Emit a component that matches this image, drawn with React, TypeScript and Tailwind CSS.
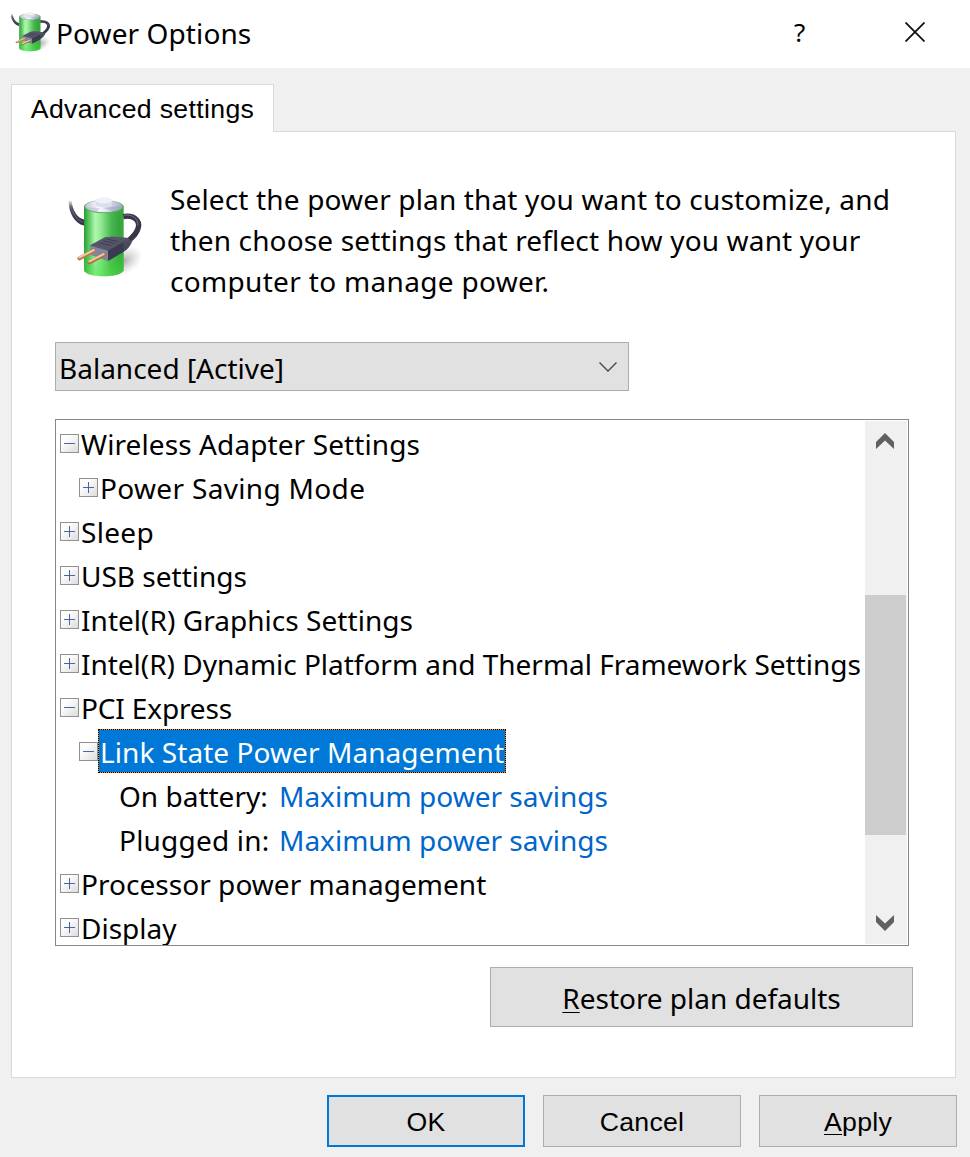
import { clsx } from "clsx";

type IconProps = { id: string; className?: string };

// Battery with a power cord wrapped around it
function BatteryIcon({ id, className }: IconProps) {
  return (
    <svg viewBox="45 45 240 250" preserveAspectRatio="none" className={className}>
      <defs>
        <linearGradient id={`${id}-body`} x1="0" x2="1" y1="0" y2="0">
          <stop offset="0" stopColor="#2c9a36" />
          <stop offset="0.1" stopColor="#4cc254" />
          <stop offset="0.28" stopColor="#b0f7b0" />
          <stop offset="0.42" stopColor="#93ea94" />
          <stop offset="0.68" stopColor="#4ab850" />
          <stop offset="0.88" stopColor="#35a53c" />
          <stop offset="1" stopColor="#3aa83f" />
        </linearGradient>
        <linearGradient id={`${id}-glow`} x1="0" x2="0" y1="0" y2="1">
          <stop offset="0.5" stopColor="#30d030" stopOpacity="0" />
          <stop offset="1" stopColor="#4de04a" stopOpacity="0.6" />
        </linearGradient>
        <linearGradient id={`${id}-cap`} x1="0" x2="1" y1="0" y2="0">
          <stop offset="0" stopColor="#c5c5da" />
          <stop offset="0.35" stopColor="#fafbfe" />
          <stop offset="0.6" stopColor="#dfe1ef" />
          <stop offset="1" stopColor="#a9acc6" />
        </linearGradient>
        <linearGradient id={`${id}-tail`} x1="0" x2="0" y1="0" y2="1">
          <stop offset="0" stopColor="#4a4b60" stopOpacity="0.1" />
          <stop offset="0.3" stopColor="#4a4b60" />
          <stop offset="1" stopColor="#30303f" />
        </linearGradient>
        <linearGradient id={`${id}-plug`} x1="0" x2="1" y1="0" y2="1">
          <stop offset="0" stopColor="#6a6a7e" />
          <stop offset="1" stopColor="#353547" />
        </linearGradient>
        <radialGradient id={`${id}-shadow`}>
          <stop offset="0" stopColor="#777" stopOpacity="0.6" />
          <stop offset="1" stopColor="#aaa" stopOpacity="0" />
        </radialGradient>
      </defs>
      <ellipse cx="220" cy="244" rx="62" ry="40" transform="rotate(-28 220 244)" fill={`url(#${id}-shadow)`} />
      <path d="M56 62 L65 62 C67 88 79 112 102 119 L102 137 C74 130 56 100 56 62Z" fill={`url(#${id}-tail)`} />
      <path d="M63 82 C69 103 82 121 101 128" fill="none" stroke="#7b7c93" strokeWidth="2" />
      <path d="M102 78 V272 C108 296 214 296 221 272 V78Z" fill={`url(#${id}-body)`} />
      <path d="M102 78 V272 C108 296 214 296 221 272 V78Z" fill={`url(#${id}-glow)`} />
      <ellipse cx="161.500" cy="80" rx="59.500" ry="20" fill="#58b05c" />
      <ellipse cx="161.500" cy="79" rx="55" ry="18" fill={`url(#${id}-cap)`} />
      <path d="M108 82 L150 84 L142 96 C124 95 111 91 108 82Z" fill="#b2b2d0" opacity="0.5" />
      <path d="M161 84 L213 77 C218 87 204 92 190 94Z" fill="#989bb8" opacity="0.5" />
      <path d="M137 61 V75 C139 84 184 84 186 75 V61Z" fill="#dcdeeb" />
      <ellipse cx="161.500" cy="61" rx="24.500" ry="9" fill="#f0f1f8" />
      <path d="M220 110 C252 104 270 122 265 143 C261 162 247 172 230 188" fill="none" stroke="#363648" strokeWidth="16" />
      <path d="M222 106 C248 102 265 117 264 137" fill="none" stroke="#747489" strokeWidth="3" />
      <path d="M120 197 L164 173 C184 168 211 172 232 174 L247 184 C241 200 231 210 222 215 L175 243 L121 224Z" fill={`url(#${id}-plug)`} />
      <path d="M120 197 L164 173 C184 168 211 172 232 176 L174 213Z" fill="#56566a" />
      <path d="M120 197 L174 213 L175 243 L121 225Z" fill="#84859b" />
      <path d="M174 213 L220 187 L222 215 L175 243Z" fill="#3b3b4f" />
      <path d="M149 189 L184 197 M160 183 L195 191 M171 178 L205 185" stroke="#3e3e50" strokeWidth="3" />
      <g strokeLinecap="round">
        <path d="M132 213 L88 236" stroke="#b27f52" strokeWidth="12" />
        <path d="M131 211 L88 233" stroke="#f3cca0" strokeWidth="6" />
        <path d="M162 225 L118 248" stroke="#a97549" strokeWidth="12" />
        <path d="M161 223 L118 245" stroke="#f3cca0" strokeWidth="6" />
      </g>
    </svg>
  );
}

function Expander({ open }: { open?: boolean }) {
  return (
    <svg viewBox="0 0 19 19" className="mt-[13px] h-[19px] w-[19px] shrink-0" shapeRendering="crispEdges">
      <defs>
        <linearGradient id="expander" x1="0" x2="1" y1="0" y2="1">
          <stop offset="0.3" stopColor="#fdfdfd" />
          <stop offset="1" stopColor="#dcdcdc" />
        </linearGradient>
      </defs>
      <rect x="0.5" y="0.5" width="18" height="18" fill="url(#expander)" stroke="#919191" />
      <path d="M4 9.500 H15" stroke="#4b63a7" />
      {!open && <path d="M9.500 4 V15" stroke="#4b63a7" />}
    </svg>
  );
}

type Row = {
  label: string;
  tracking?: string;
  open?: boolean;
  child?: boolean;
  selected?: boolean;
  value?: string;
};

const rows: Row[] = [
  { label: "Wireless Adapter Settings", tracking: "tracking-[0.1px]", open: true },
  { label: "Power Saving Mode", tracking: "tracking-[0.33px]", child: true },
  { label: "Sleep", tracking: "tracking-[0.3px]" },
  { label: "USB settings" },
  { label: "Intel(R) Graphics Settings", tracking: "tracking-[0.04px]" },
  { label: "Intel(R) Dynamic Platform and Thermal Framework Settings", tracking: "tracking-[-0.02px]" },
  { label: "PCI Express", tracking: "tracking-[-0.15px]", open: true },
  { label: "Link State Power Management", tracking: "tracking-[0.07px]", open: true, child: true, selected: true },
  { label: "On battery:", value: "Maximum power savings" },
  { label: "Plugged in:", tracking: "tracking-[0.2px]", value: "Maximum power savings" },
  { label: "Processor power management", tracking: "tracking-[0.04px]" },
  { label: "Display" },
];

function TreeRow({ label, tracking, open, child, selected, value }: Row) {
  if (value) {
    return (
      <div className="flex h-11 pl-[63px] leading-[46px]">
        <span className={clsx("w-[160px] shrink-0", tracking)}>{label}</span>
        <a className="text-[#0066cc]">{value}</a>
      </div>
    );
  }
  return (
    <div className={clsx("flex h-11", child ? "pl-[23px]" : "pl-1")}>
      <Expander open={open} />
      {selected ? (
        <span className="h-11 w-[408px] border border-dotted border-black bg-[#ff8728]">
          <span className={clsx("block h-[42px] bg-[#0078d7] pl-[1px] leading-[44px] text-white", tracking)}>{label}</span>
        </span>
      ) : (
        <span className={clsx("pl-[2px] leading-[46px]", tracking)}>{label}</span>
      )}
    </div>
  );
}

export default function App() {
  return (
    <div className="flex h-[1157px] w-[970px] flex-col overflow-hidden bg-[#f0f0f0] font-['Noto_Sans',sans-serif] text-[28px] whitespace-nowrap text-black">
      <header className="flex h-[68px] shrink-0 bg-white">
        <BatteryIcon id="title" className="mt-[11px] ml-[9px] h-[41px] w-[43px]" />
        <h1 className="ml-[4px] w-[738px] leading-[66px] tracking-[0.1px]">Power Options</h1>
        <span className="w-[111px] text-[26px] leading-[64px]">?</span>
        <svg viewBox="0 0 20 20" className="mt-[22px] h-5 w-5" fill="none" stroke="#111" strokeWidth="1.800">
          <path d="M0.500 0.500 L19.500 19.500 M19.500 0.500 L0.500 19.500" />
        </svg>
      </header>

      <div className="mt-4 ml-[11px] flex h-[48px] w-[263px] shrink-0 justify-center border border-b-0 border-[#d9d9d9] bg-white font-['Liberation_Sans',sans-serif] text-[26.667px] leading-[49px] tracking-[0.33px]">
        <span className="z-10">Advanced settings</span>
      </div>
      <main className="-mt-px ml-[11px] h-[947px] w-[945px] shrink-0 border border-[#d9d9d9] bg-white">
        <div className="-mt-px h-px w-[261px] bg-white" />
        <div className="flex pt-[47px]">
          <BatteryIcon id="main" className="mt-[16px] ml-[53px] h-[83px] w-[80px]" />
          <div className="ml-[25px] leading-[41px] tracking-[0.15px]">
            <p>Select the power plan that you want to customize, and</p>
            <p>then choose settings that reflect how you want your</p>
            <p className="tracking-[0.32px]">computer to manage power.</p>
          </div>
        </div>

        <div className="mt-[40px] ml-[43px] flex h-[49px] w-[574px] justify-between border border-[#adadad] bg-[#e1e1e1] pr-[11px] pl-[3px] leading-[50px]">
          <span>Balanced [Active]</span>
          <svg viewBox="0 0 18 10" className="mt-[19px] h-[10px] w-[18px]" fill="none" stroke="#444" strokeWidth="1.300">
            <path d="M0.500 0.500 L9 9 L17.500 0.500" />
          </svg>
        </div>

        <div className="mt-[28px] ml-[43px] flex h-[527px] w-[854px] border border-[#828790]">
          <div className="w-[809px] overflow-hidden pt-px">
            {rows.map((row) => (
              <TreeRow key={row.label} {...row} />
            ))}
          </div>
          <div className="mt-px flex h-[523px] w-[42px] flex-col bg-[#f0f0f0]">
            <svg viewBox="0 0 18 16" className="mt-[12px] ml-[11px] h-4 w-[18px] shrink-0" fill="#606060">
              <path d="M0 9 L9 0 L18 9 V16 L9 7.500 L0 16Z" />
            </svg>
            <div className="mt-[146px] h-[240px] w-[41px] shrink-0 bg-[#cdcdcd]" />
            <svg viewBox="0 0 18 16" className="mt-[80px] ml-[11px] h-4 w-[18px] shrink-0" fill="#606060">
              <path d="M0 7 L9 16 L18 7 V0 L9 8.500 L0 0Z" />
            </svg>
          </div>
        </div>

        <button className="mt-[21px] ml-[478px] block h-[60px] w-[423px] border border-[#adadad] bg-[#e1e1e1] leading-[61px] tracking-[-0.03px]">
          <span className="underline decoration-1 underline-offset-[3px]">R</span>estore plan defaults
        </button>
      </main>

      <footer className="mt-[17px] flex gap-[18px] pl-[327px] font-['Liberation_Sans',sans-serif] text-[26.667px] leading-[50px] tracking-[0.25px]">
        <button className="h-[52px] w-[198px] border-2 border-[#0078d7] bg-[#e1e1e1]">OK</button>
        <button className="h-[52px] w-[198px] border border-[#adadad] bg-[#e1e1e1] leading-[52px]">Cancel</button>
        <button className="h-[52px] w-[198px] border border-[#adadad] bg-[#e1e1e1] leading-[52px]">
          <span className="underline decoration-1 underline-offset-[3px]">A</span>pply
        </button>
      </footer>
    </div>
  );
}
